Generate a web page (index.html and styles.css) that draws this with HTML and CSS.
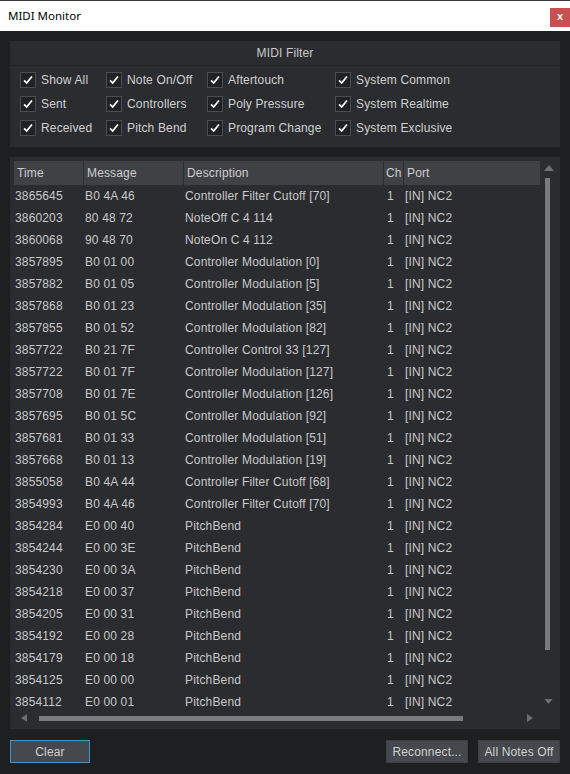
FILE: index.html
```html
<!DOCTYPE html>
<html>
<head>
<meta charset="utf-8">
<link rel="stylesheet" href="styles.css">
</head>
<body>
<div class="titlebar">
  <span class="title">MIDI Monitor</span>
  <span class="close">x</span>
</div>
<div class="content">
  <div class="filter">
    <div class="filter-head">MIDI Filter</div>
    <div class="filter-grid">
      <label class="cb"><span class="box"><svg viewBox="0 0 16 16"><path d="M3.5 8.5 L6.5 11.5 L12.5 4" /></svg></span>Show All</label>
      <label class="cb"><span class="box"><svg viewBox="0 0 16 16"><path d="M3.5 8.5 L6.5 11.5 L12.5 4" /></svg></span>Note On/Off</label>
      <label class="cb"><span class="box"><svg viewBox="0 0 16 16"><path d="M3.5 8.5 L6.5 11.5 L12.5 4" /></svg></span>Aftertouch</label>
      <label class="cb"><span class="box"><svg viewBox="0 0 16 16"><path d="M3.5 8.5 L6.5 11.5 L12.5 4" /></svg></span>System Common</label>
      <label class="cb"><span class="box"><svg viewBox="0 0 16 16"><path d="M3.5 8.5 L6.5 11.5 L12.5 4" /></svg></span>Sent</label>
      <label class="cb"><span class="box"><svg viewBox="0 0 16 16"><path d="M3.5 8.5 L6.5 11.5 L12.5 4" /></svg></span>Controllers</label>
      <label class="cb"><span class="box"><svg viewBox="0 0 16 16"><path d="M3.5 8.5 L6.5 11.5 L12.5 4" /></svg></span>Poly Pressure</label>
      <label class="cb"><span class="box"><svg viewBox="0 0 16 16"><path d="M3.5 8.5 L6.5 11.5 L12.5 4" /></svg></span>System Realtime</label>
      <label class="cb"><span class="box"><svg viewBox="0 0 16 16"><path d="M3.5 8.5 L6.5 11.5 L12.5 4" /></svg></span>Received</label>
      <label class="cb"><span class="box"><svg viewBox="0 0 16 16"><path d="M3.5 8.5 L6.5 11.5 L12.5 4" /></svg></span>Pitch Bend</label>
      <label class="cb"><span class="box"><svg viewBox="0 0 16 16"><path d="M3.5 8.5 L6.5 11.5 L12.5 4" /></svg></span>Program Change</label>
      <label class="cb"><span class="box"><svg viewBox="0 0 16 16"><path d="M3.5 8.5 L6.5 11.5 L12.5 4" /></svg></span>System Exclusive</label>
    </div>
  </div>

  <div class="log">
    <div class="log-main">
      <div class="table">
        <div class="thead">
          <div class="th">Time</div>
          <div class="th">Message</div>
          <div class="th">Description</div>
          <div class="th ch">Ch</div>
          <div class="th last">Port</div>
        </div>
        <div class="tbody" id="tbody">
          <div class="tr"><span>3865645</span><span>B0 4A 46</span><span>Controller Filter Cutoff [70]</span><span>1</span><span>[IN] NC2</span></div>
          <div class="tr"><span>3860203</span><span>80 48 72</span><span>NoteOff C 4 114</span><span>1</span><span>[IN] NC2</span></div>
          <div class="tr"><span>3860068</span><span>90 48 70</span><span>NoteOn C 4 112</span><span>1</span><span>[IN] NC2</span></div>
          <div class="tr"><span>3857895</span><span>B0 01 00</span><span>Controller Modulation [0]</span><span>1</span><span>[IN] NC2</span></div>
          <div class="tr"><span>3857882</span><span>B0 01 05</span><span>Controller Modulation [5]</span><span>1</span><span>[IN] NC2</span></div>
          <div class="tr"><span>3857868</span><span>B0 01 23</span><span>Controller Modulation [35]</span><span>1</span><span>[IN] NC2</span></div>
          <div class="tr"><span>3857855</span><span>B0 01 52</span><span>Controller Modulation [82]</span><span>1</span><span>[IN] NC2</span></div>
          <div class="tr"><span>3857722</span><span>B0 21 7F</span><span>Controller Control 33 [127]</span><span>1</span><span>[IN] NC2</span></div>
          <div class="tr"><span>3857722</span><span>B0 01 7F</span><span>Controller Modulation [127]</span><span>1</span><span>[IN] NC2</span></div>
          <div class="tr"><span>3857708</span><span>B0 01 7E</span><span>Controller Modulation [126]</span><span>1</span><span>[IN] NC2</span></div>
          <div class="tr"><span>3857695</span><span>B0 01 5C</span><span>Controller Modulation [92]</span><span>1</span><span>[IN] NC2</span></div>
          <div class="tr"><span>3857681</span><span>B0 01 33</span><span>Controller Modulation [51]</span><span>1</span><span>[IN] NC2</span></div>
          <div class="tr"><span>3857668</span><span>B0 01 13</span><span>Controller Modulation [19]</span><span>1</span><span>[IN] NC2</span></div>
          <div class="tr"><span>3855058</span><span>B0 4A 44</span><span>Controller Filter Cutoff [68]</span><span>1</span><span>[IN] NC2</span></div>
          <div class="tr"><span>3854993</span><span>B0 4A 46</span><span>Controller Filter Cutoff [70]</span><span>1</span><span>[IN] NC2</span></div>
          <div class="tr"><span>3854284</span><span>E0 00 40</span><span>PitchBend</span><span>1</span><span>[IN] NC2</span></div>
          <div class="tr"><span>3854244</span><span>E0 00 3E</span><span>PitchBend</span><span>1</span><span>[IN] NC2</span></div>
          <div class="tr"><span>3854230</span><span>E0 00 3A</span><span>PitchBend</span><span>1</span><span>[IN] NC2</span></div>
          <div class="tr"><span>3854218</span><span>E0 00 37</span><span>PitchBend</span><span>1</span><span>[IN] NC2</span></div>
          <div class="tr"><span>3854205</span><span>E0 00 31</span><span>PitchBend</span><span>1</span><span>[IN] NC2</span></div>
          <div class="tr"><span>3854192</span><span>E0 00 28</span><span>PitchBend</span><span>1</span><span>[IN] NC2</span></div>
          <div class="tr"><span>3854179</span><span>E0 00 18</span><span>PitchBend</span><span>1</span><span>[IN] NC2</span></div>
          <div class="tr"><span>3854125</span><span>E0 00 00</span><span>PitchBend</span><span>1</span><span>[IN] NC2</span></div>
          <div class="tr"><span>3854112</span><span>E0 00 01</span><span>PitchBend</span><span>1</span><span>[IN] NC2</span></div>
        </div>
      </div>
      <div class="vscroll">
        <svg class="arr-up" viewBox="0 0 10 6"><path d="M5 0 L10 6 L0 6 Z"/></svg>
        <div class="vthumb"></div>
        <svg class="arr-down" viewBox="0 0 10 6"><path d="M0 0 L10 0 L5 6 Z"/></svg>
      </div>
    </div>
    <div class="hscroll">
      <svg class="arr-left" viewBox="0 0 6 8"><path d="M6 0 L6 8 L0 4 Z"/></svg>
      <div class="htrack"><div class="hthumb"></div></div>
      <svg class="arr-right" viewBox="0 0 6 8"><path d="M0 0 L6 4 L0 8 Z"/></svg>
    </div>
  </div>

  <div class="buttons">
    <button class="btn focus">Clear</button>
    <div class="spacer"></div>
    <button class="btn reconnect">Reconnect...</button>
    <button class="btn notes">All Notes Off</button>
  </div>
</div>
</body>
</html>
```

FILE: styles.css
```css
html, body {
  margin: 0;
  padding: 0;
}
body {
  width: 570px;
  height: 774px;
  background: #1e1f21;
  font-family: "Liberation Sans", Arial, sans-serif;
  font-size: 12px;
  letter-spacing: 0.15px;
  color: #c8c9cb;
  overflow: hidden;
}

.titlebar {
  height: 31px;
  background: #ffffff;
  border-top: 1px solid #3a3a3a;
  box-sizing: border-box;
  display: flex;
  align-items: flex-start;
  justify-content: space-between;
  letter-spacing: 0;
}
.title {
  font-family: "Noto Sans", "Open Sans", sans-serif;
  font-size: 11.5px;
  color: #000;
  margin: 7px 0 0 8px;
}
.close {
  width: 20px;
  height: 19px;
  margin-top: 7px;
  background: #c75050;
  color: #fff;
  font-family: "Liberation Sans", Arial, sans-serif;
  font-weight: bold;
  font-size: 11px;
  line-height: 17px;
  text-align: center;
}

.content {
  padding: 0 10px;
}

.filter {
  margin-top: 10px;
  height: 106px;
  background: #2b2c2f;
  box-sizing: border-box;
}
.filter-head {
  height: 24px;
  line-height: 24px;
  text-align: center;
  border-bottom: 1px solid #232427;
  color: #c8c9cb;
}
.filter-grid {
  display: grid;
  grid-template-columns: 86px 101px 128px 1fr;
  row-gap: 8px;
  padding: 6px 0 0 10px;
}
.cb {
  display: flex;
  align-items: center;
  gap: 5px;
  height: 16px;
  white-space: nowrap;
  color: #cfd0d2;
}
.box {
  width: 16px;
  height: 16px;
  box-sizing: border-box;
  border: 1px solid #4c4d51;
  background: #212225;
  display: block;
}
.box svg {
  width: 14px;
  height: 14px;
  display: block;
}
.box path {
  fill: none;
  stroke: #ffffff;
  stroke-width: 2;
}

.log {
  margin-top: 10px;
  height: 572px;
  background: #2b2c2f;
  box-sizing: border-box;
  padding: 4px 4px 0 4px;
}
.log-main {
  display: flex;
  height: 552px;
}
.table {
  width: 526px;
}
.thead {
  display: grid;
  grid-template-columns: 70px 100px 200px 20px 136px;
  height: 24px;
  background: #404145;
}
.th {
  line-height: 24px;
  padding-left: 3px;
  border-right: 1px solid #2c2d30;
  color: #cdced0;
  white-space: nowrap;
  overflow: hidden;
}
.th.ch {
  padding-left: 2px;
}
.th.last {
  border-right: none;
}
.tr {
  display: grid;
  grid-template-columns: 70px 100px 200px 20px 136px;
  height: 22px;
  line-height: 22px;
}
.tr span {
  padding-left: 1px;
  white-space: nowrap;
  overflow: hidden;
}
.tr span:nth-child(4) {
  padding-left: 3px;
}

.vscroll {
  width: 16px;
  display: flex;
  flex-direction: column;
  align-items: center;
}
.arr-up {
  width: 10px;
  height: 6px;
  margin-top: 4px;
  margin-left: 1px;
  fill: #707174;
}
.vthumb {
  width: 5px;
  height: 472px;
  margin-top: 7px;
  background: #797a7c;
  margin-left: -2px;
}
.arr-down {
  width: 9px;
  height: 5px;
  margin-top: 49px;
  margin-left: 1px;
  fill: #6c6d70;
}

.hscroll {
  height: 16px;
  display: flex;
  align-items: flex-start;
}
.arr-left {
  width: 6px;
  height: 8px;
  margin: 1px 0 0 7px;
  fill: #6c6d70;
}
.htrack {
  margin: 3px 0 0 12px;
  width: 424px;
  height: 5px;
  background: #797a7c;
}
.arr-right {
  width: 6px;
  height: 8px;
  margin: 1px 0 0 64px;
  fill: #6c6d70;
}

.buttons {
  display: flex;
  margin-top: 11px;
  gap: 10px;
}
.spacer {
  flex: 1;
}
.btn {
  height: 23px;
  box-sizing: border-box;
  background: #45484c;
  border: 1px solid #3e4044;
  color: #cfd0d2;
  font-family: "Liberation Sans", Arial, sans-serif;
  font-size: 12px;
  letter-spacing: 0.15px;
  padding: 0;
  margin: 0;
}
.btn.focus {
  width: 80px;
  border-color: #3b95d6;
}
.btn.reconnect {
  width: 82px;
}
.btn.notes {
  width: 82px;
}
```
